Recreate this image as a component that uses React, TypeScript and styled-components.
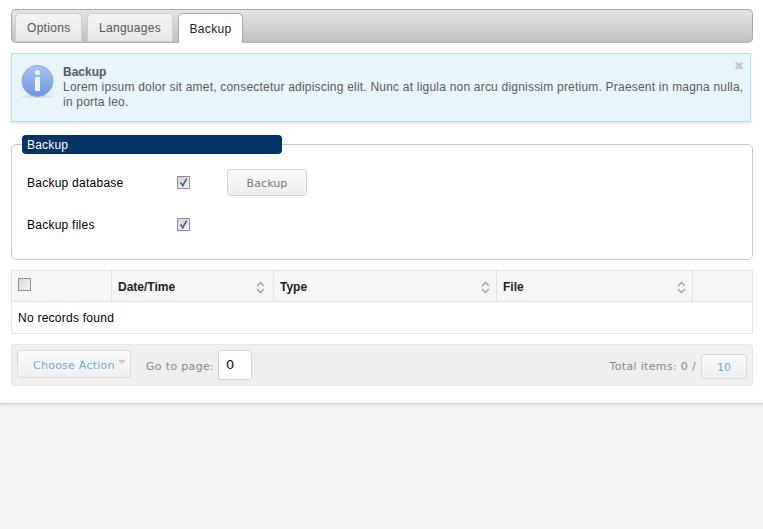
import styled, { createGlobalStyle } from "styled-components";

const GlobalStyle = createGlobalStyle`
  html, body {
    margin: 0;
    padding: 0;
    height: 100%;
    background: #f4f2f3;
    font-family: "Liberation Sans", Arial, sans-serif;
    font-size: 12px;
    color: #000;
  }
  #root {
    height: 100%;
  }
`;

const InfoIcon = () => (
  <svg width="34" height="34" viewBox="0 0 34 34">
    <defs>
      <linearGradient id="infoBall" x1="0" y1="0" x2="0" y2="1">
        <stop offset="0" stopColor="#a9c5ee" />
        <stop offset="1" stopColor="#6b97e0" />
      </linearGradient>
    </defs>
    <ellipse cx="16.5" cy="31.5" rx="16" ry="1.5" fill="#d4dcdf" />
    <circle cx="16.5" cy="16" r="15.5" fill="url(#infoBall)" stroke="#86a8e0" strokeWidth="1" />
    <circle cx="16.5" cy="7.5" r="2.6" fill="#f1f5fc" />
    <rect x="14" y="12" width="5" height="14" rx="0.5" fill="#f1f5fc" />
  </svg>
);

const SortIcon = ({ inset = 0 }: { inset?: number }) => (
  <SortSvg $inset={inset} width="9" height="13" viewBox="0 0 9 13">
    <path d="M1 5 L4.5 1.5 L8 5" fill="none" stroke="#a0a0a0" strokeWidth="1.4" />
    <path d="M1 8 L4.5 11.5 L8 8" fill="none" stroke="#a0a0a0" strokeWidth="1.4" />
  </SortSvg>
);

const CheckMark = () => (
  <svg width="11" height="11" viewBox="0 0 11 11">
    <path d="M2.5 5.5 L4.8 8.6 L8.6 1.6" fill="none" stroke="#4f6294" strokeWidth="1.7" />
  </svg>
);

const App = () => {
  return (
    <>
      <GlobalStyle />
      <Page>
        <TabBar>
          <Tab>Options</Tab>
          <Tab>Languages</Tab>
          <Tab $active>Backup</Tab>
        </TabBar>

        <Message>
          <InfoIcon />
          <MessageText>
            <MessageTitle>Backup</MessageTitle>
            Lorem ipsum dolor sit amet, consectetur adipiscing elit. Nunc at ligula non arcu dignissim pretium.
            Praesent in magna nulla, in porta leo.
          </MessageText>
          <CloseGlyph>✖</CloseGlyph>
        </Message>

        <Fieldset>
          <Legend>Backup</Legend>
          <FormRow>
            <FormLabel>Backup database</FormLabel>
            <CheckBox $checked>
              <CheckMark />
            </CheckBox>
            <BackupButton>Backup</BackupButton>
          </FormRow>
          <FormRow>
            <FormLabel>Backup files</FormLabel>
            <CheckBox $checked>
              <CheckMark />
            </CheckBox>
          </FormRow>
        </Fieldset>

        <Table>
          <HeadRow>
            <HeadCell $width={100}>
              <HeadCheck />
            </HeadCell>
            <HeadCell $width={162}>
              Date/Time
              <SortIcon inset={2} />
            </HeadCell>
            <HeadCell $width={223}>
              Type
              <SortIcon />
            </HeadCell>
            <HeadCell $width={196}>
              File
              <SortIcon />
            </HeadCell>
            <HeadCell $width={59} />
          </HeadRow>
          <EmptyRow>No records found</EmptyRow>
        </Table>

        <Toolbar>
          <ActionSelect>
            Choose Action
            <Caret />
          </ActionSelect>
          <PagerLabel>Go to page:</PagerLabel>
          <PageInput>0</PageInput>
          <Spacer />
          <PagerLabel>Total items: 0 /</PagerLabel>
          <PageSize>10</PageSize>
        </Toolbar>
      </Page>
    </>
  );
};

export default App;

const Page = styled.div`
  box-sizing: border-box;
  height: 403px;
  padding: 9px 10px 0 11px;
  background: #fff;
  box-shadow: 0 1px 3px rgba(0, 0, 0, 0.2);
`;

const TabBar = styled.div`
  box-sizing: border-box;
  height: 34px;
  display: flex;
  align-items: flex-end;
  gap: 4.5px;
  padding: 0 0 0 3px;
  border: 1px solid #a9a9a9;
  border-bottom-color: #b5b5b5;
  border-radius: 5px;
  background: linear-gradient(#e4e4e4, #c0c0c0);
`;

const Tab = styled.div<{ $active?: boolean }>`
  box-sizing: border-box;
  height: ${(props) => (props.$active ? "30px" : "29px")};
  margin-bottom: ${(props) => (props.$active ? "-1px" : "0")};
  padding: 0 11px;
  display: flex;
  align-items: center;
  font-size: 12px;
  letter-spacing: 0.3px;
  border-radius: 5px 5px 0 0;
  color: ${(props) => (props.$active ? "#222" : "#555")};
  background: ${(props) => (props.$active ? "#fff" : "linear-gradient(#f2f2f2, #e8e8e8)")};
  border: 1px solid ${(props) => (props.$active ? "#a9a9a9" : "#cfcfcf")};
  border-bottom: ${(props) => (props.$active ? "none" : "1px solid #cfcfcf")};
`;

const Message = styled.div`
  box-sizing: border-box;
  position: relative;
  width: 740px;
  height: 69px;
  margin-top: 10px;
  padding: 11px 4px 0 9px;
  display: flex;
  gap: 8px;
  background: #e8f3fa;
  border: 1px solid #addff2;
  box-shadow: 0 2px 3px rgba(0, 0, 0, 0.1);
`;

const MessageText = styled.div`
  flex: 1;
  font-size: 12px;
  line-height: 15px;
  letter-spacing: 0.21px;
  color: #5a5a5a;
`;

const MessageTitle = styled.div`
  font-weight: bold;
  letter-spacing: 0;
`;

const CloseGlyph = styled.div`
  position: absolute;
  top: 5px;
  right: 6px;
  font-family: "DejaVu Sans", sans-serif;
  font-size: 12px;
  color: #c4c8cc;
`;

const Fieldset = styled.div`
  box-sizing: border-box;
  height: 116px;
  margin-top: 22px;
  padding: 0 15px;
  border: 1px solid #c8c8c8;
  border-radius: 5px;
`;

const Legend = styled.div`
  box-sizing: border-box;
  width: 260px;
  height: 19px;
  margin: -10px 0 14px -5px;
  padding: 1px 0 0 5px;
  line-height: 18px;
  font-size: 12px;
  letter-spacing: 0.2px;
  color: #fff;
  background: #003366;
  border-radius: 4px;
`;

const FormRow = styled.div`
  height: 28px;
  margin-bottom: 14px;
  display: flex;
  align-items: center;
`;

const FormLabel = styled.div`
  width: 150px;
  margin-top: 2px;
  font-size: 12px;
  letter-spacing: 0.25px;
`;

const CheckBox = styled.div<{ $checked?: boolean }>`
  box-sizing: border-box;
  width: 13px;
  height: 13px;
  display: flex;
  align-items: center;
  justify-content: center;
  border: 1px solid #8e8f8f;
  background: ${(props) => (props.$checked ? "linear-gradient(135deg, #d4d4d8, #f4f4f6)" : "linear-gradient(135deg, #d8d8d8, #f6f6f6)")};
`;

const HeadCheck = styled(CheckBox)`
  margin-top: -5px;
  margin-right: auto;
`;

const BackupButton = styled.div`
  box-sizing: border-box;
  width: 80px;
  height: 27px;
  margin-left: 37px;
  padding-top: 2px;
  display: flex;
  align-items: center;
  justify-content: center;
  font-family: "DejaVu Sans", sans-serif;
  font-size: 11px;
  letter-spacing: 0.1px;
  color: #777;
  border: 1px solid #d5d5d5;
  border-radius: 3px;
  background: linear-gradient(#fafafa, #efeded);
`;

const Table = styled.div`
  margin-top: 10px;
  border: 1px solid #e6e6e6;
`;

const HeadRow = styled.div`
  display: flex;
  height: 30px;
  background: #f6f6f6;
  border-bottom: 1px solid #e3e3e3;
`;

const HeadCell = styled.div<{ $width: number }>`
  box-sizing: border-box;
  width: ${(props) => props.$width}px;
  padding: 2px 6px 0;
  display: flex;
  align-items: center;
  justify-content: space-between;
  font-weight: bold;
  font-size: 12px;
  color: #222;
  border-right: 1px solid #e3e3e3;

  &:last-child {
    border-right: none;
  }
`;

const SortSvg = styled.svg<{ $inset: number }>`
  margin-right: ${(props) => props.$inset}px;
`;

const EmptyRow = styled.div`
  height: 31px;
  padding-left: 6px;
  line-height: 32px;
  font-size: 12px;
  letter-spacing: 0.25px;
`;

const Toolbar = styled.div`
  box-sizing: border-box;
  height: 42px;
  margin-top: 10px;
  padding: 0 5px;
  display: flex;
  align-items: center;
  background: #efeded;
  border: 1px solid #e6e6e6;
  border-radius: 3px;
  font-family: "DejaVu Sans", sans-serif;
  font-size: 11px;
`;

const ActionSelect = styled.div`
  box-sizing: border-box;
  width: 114px;
  height: 28px;
  margin-top: -2px;
  padding: 2px 3px 0 15px;
  display: flex;
  align-items: center;
  letter-spacing: 0.25px;
  color: #6aaed6;
  border: 1px solid #d8d8d8;
  border-radius: 3px;
  background: linear-gradient(#fafafa, #efeded);
`;

const Caret = styled.span`
  margin: -6px 0 0 3px;
  border-left: 4px solid transparent;
  border-right: 4px solid transparent;
  border-top: 4px solid #c8c8c8;
`;

const PagerLabel = styled.div`
  margin: 2px 0 0 15px;
  letter-spacing: 0.33px;
  color: #888;
`;

const PageInput = styled.div`
  box-sizing: border-box;
  width: 34px;
  height: 30px;
  margin-left: 4px;
  padding-left: 7px;
  line-height: 28px;
  font-size: 13px;
  color: #111;
  background: #fff;
  border: 1px solid #cfd6e0;
  border-radius: 3px;
`;

const Spacer = styled.div`
  flex: 1;
`;

const PageSize = styled.div`
  box-sizing: border-box;
  width: 46px;
  height: 25px;
  margin: 3px 0 0 5px;
  line-height: 25px;
  text-align: center;
  color: #6aaed6;
  background: linear-gradient(#fafafa, #efeded);
  border: 1px solid #d5d5d5;
  border-radius: 3px;
`;
